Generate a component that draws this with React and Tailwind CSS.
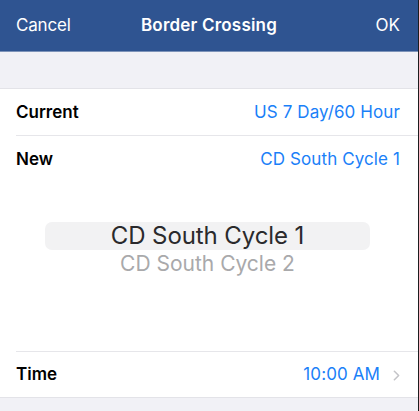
import { ChevronRight } from 'lucide-react';

const font = { fontFamily: 'Inter, "Noto Sans", sans-serif' };

function Row({ label, value, chevron, height }) {
  return (
    <div className={`flex items-center justify-between ${height} pt-[1px] ml-[16px] pr-[18px]`}>
      <span className="text-[17px] font-semibold text-black">{label}</span>
      <span className="flex items-center text-[17px] text-[#1a80f8] tracking-[0.1px]">
        {value}
        {chevron && <ChevronRight className="ml-[8px] -mr-[5px] w-[17px] h-[17px] text-[#c4c4c8]" strokeWidth={2.2} />}
      </span>
    </div>
  );
}

export default function App() {
  return (
    <div className="flex w-[419px] h-[411px] bg-[#1c1c1e] overflow-hidden" style={font}>
      <div className="w-[418px] h-full flex flex-col bg-[#f1f1f6]">
        {/* Nav bar */}
        <div className="h-[52px] bg-[#2f5491] border-b border-[#7d93b9] grid grid-cols-[1fr_auto_1fr] items-center px-[16px] text-white shrink-0">
          <span className="text-[17px] tracking-[-0.2px]">Cancel</span>
          <span className="text-[17px] font-semibold tracking-[0.2px]">Border Crossing</span>
          <span className="text-[17px] pr-[2px] justify-self-end">OK</span>
        </div>

        <div className="h-[37px] shrink-0 border-b border-[#e3e3e8]" />

        <div className="bg-white border-b border-[#e3e3e8]">
          <div className="ml-[16px] border-b border-[#e6e6ea]">
            <div className="-ml-[16px]">
              <Row label="Current" value="US 7 Day/60 Hour" height="h-[46px]" />
            </div>
          </div>
          <Row label="New" value="CD South Cycle 1" height="h-[46px]" />

          {/* Picker */}
          <div className="h-[169px] flex flex-col items-center w-[415px] pt-[40px]">
            <div className="w-[325px] h-[28px] rounded-[7px] bg-[#f2f2f3] flex items-center justify-center">
              <span className="text-[24px] text-[#2a2a2c] tracking-[-0.1px]">CD South Cycle 1</span>
            </div>
            <span className="text-[21px] leading-[27px] text-[#a9a9ab]">CD South Cycle 2</span>
          </div>
          <div className="ml-[16px] border-b border-[#e6e6ea]" />

          <Row label="Time" value="10:00 AM" chevron height="h-[45px]" />
        </div>
      </div>
    </div>
  );
}
